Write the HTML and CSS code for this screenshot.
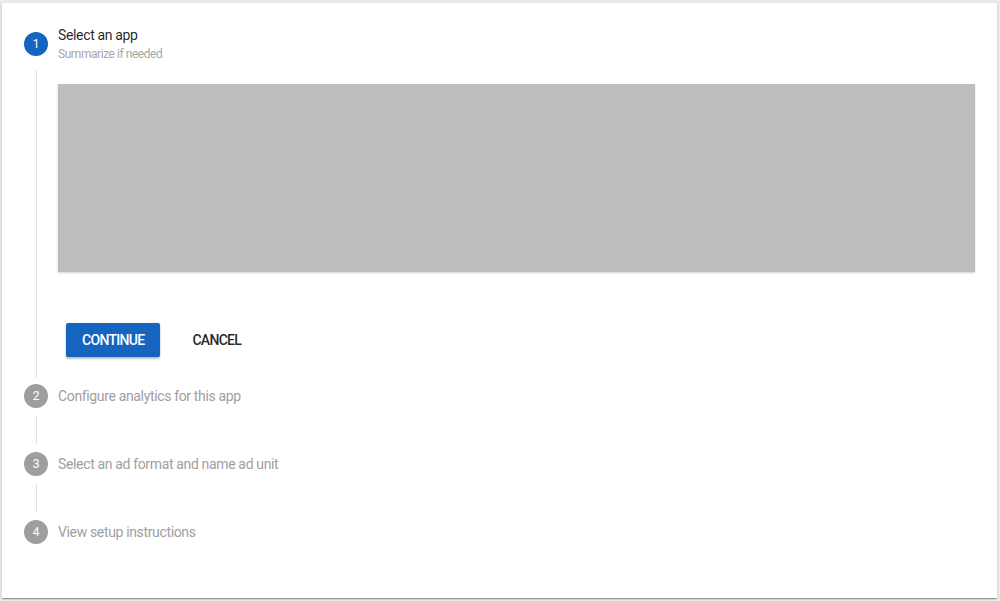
FILE: index.html
```html
<!DOCTYPE html>
<html>
<head>
<meta charset="utf-8">
<link rel="stylesheet" href="styles.css">
</head>
<body>
<div class="card">
  <div class="step-row step-row-first">
    <div class="step-icon active">1</div>
    <div class="step-label">
      <div class="step-title">Select an app</div>
      <div class="step-sub">Summarize if needed</div>
    </div>
  </div>
  <div class="connector connector-main">
    <div class="content">
      <div class="placeholder"></div>
      <div class="actions">
        <button class="btn btn-raised">CONTINUE</button>
        <button class="btn btn-flat">CANCEL</button>
      </div>
    </div>
  </div>
  <div class="step-row">
    <div class="step-icon">2</div>
    <div class="step-text">Configure analytics for this app</div>
  </div>
  <div class="connector connector-small"></div>
  <div class="step-row">
    <div class="step-icon">3</div>
    <div class="step-text">Select an ad format and name ad unit</div>
  </div>
  <div class="connector connector-small"></div>
  <div class="step-row">
    <div class="step-icon">4</div>
    <div class="step-text">View setup instructions</div>
  </div>
</div>
</body>
</html>
```

FILE: styles.css
```css
html, body {
  margin: 0;
  padding: 0;
}
body {
  background: #ebebeb;
  font-family: Roboto, "Liberation Sans", Arial, sans-serif;
  width: 1000px;
  height: 601px;
  overflow: hidden;
}
.card {
  margin: 3px 0 0 2px;
  width: 995px;
  height: 595px;
  background: #fff;
  box-shadow: 0 2px 1px -1px rgba(0,0,0,.2), 0 1px 1px 0 rgba(0,0,0,.14), 0 1px 3px 0 rgba(0,0,0,.12);
  box-sizing: border-box;
  padding-top: 24px;
}
.step-row {
  display: flex;
  align-items: center;
  padding-left: 22px;
}
.step-icon {
  width: 24px;
  height: 24px;
  border-radius: 50%;
  background: #9e9e9e;
  color: #fff;
  font-size: 12px;
  line-height: 24px;
  text-align: center;
  flex: none;
  margin-right: 10px;
}
.step-icon.active {
  background: #1565c0;
}
.step-label {
  display: flex;
  flex-direction: column;
}
.step-title {
  font-size: 14px;
  line-height: 16px;
  letter-spacing: -0.35px;
  color: rgba(0,0,0,.87);
}
.step-sub {
  font-size: 12px;
  line-height: 14px;
  margin-top: 4px;
  letter-spacing: -0.45px;
  color: #a6a6a6;
}
.step-text {
  font-size: 14px;
  line-height: 16px;
  letter-spacing: -0.35px;
  color: #a0a0a0;
}
.connector {
  margin-left: 34px;
  border-left: 1px solid #e0e0e0;
}
.connector-main {
  margin-top: 9px;
  margin-bottom: 6px;
  padding-top: 14px;
  padding-bottom: 21px;
}
.connector-small {
  height: 28px;
  margin-top: 8px;
  margin-bottom: 8px;
}
.content {
  padding-left: 21px;
  padding-right: 22px;
}
.placeholder {
  height: 188px;
  background: #bdbdbd;
  box-shadow: 0 1px 2px rgba(0,0,0,.18);
}
.actions {
  display: flex;
  margin-top: 51px;
}
.btn {
  font-family: Roboto, "Liberation Sans", Arial, sans-serif;
  font-size: 14px;
  font-weight: 500;
  letter-spacing: -0.7px;
  height: 34px;
  line-height: 34px;
  padding: 0 16px;
  margin: 0 8px;
  border: none;
  border-radius: 2px;
  background: transparent;
  cursor: pointer;
}
.btn-raised {
  background: #1565c0;
  color: #fff;
  box-shadow: 0 2px 2px rgba(0,0,0,.24), 0 0 2px rgba(0,0,0,.12);
}
.btn-flat {
  color: rgba(0,0,0,.87);
}
```
